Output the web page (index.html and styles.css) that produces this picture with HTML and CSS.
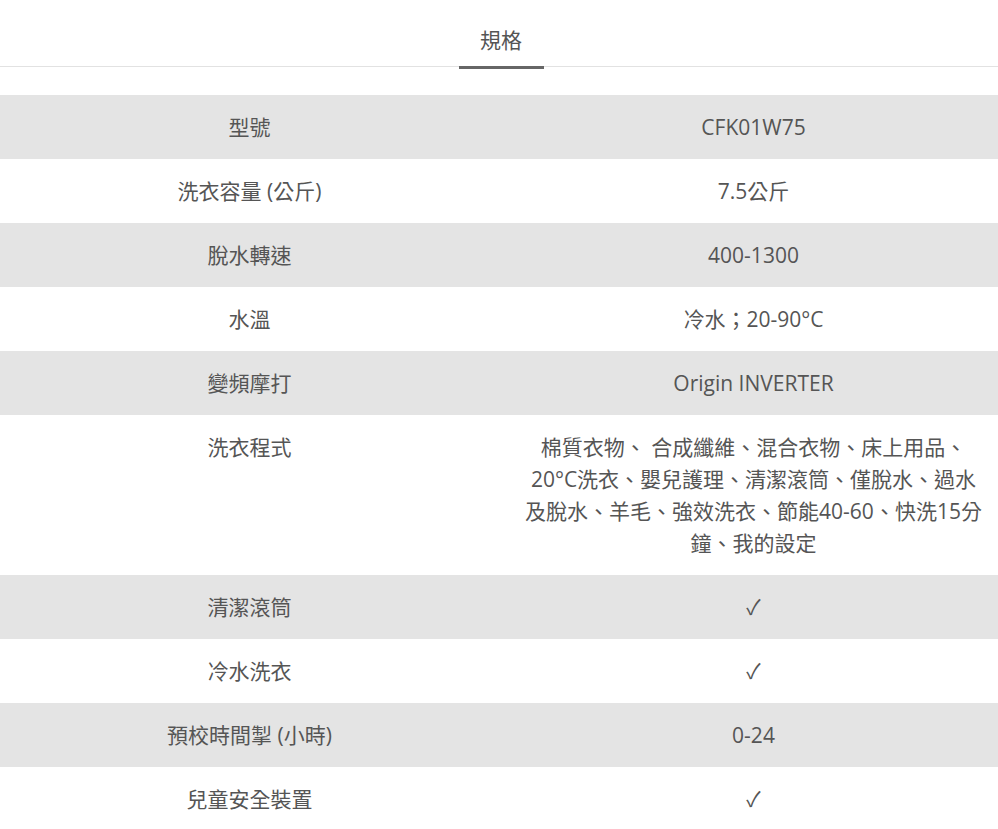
FILE: index.html
```html
<!DOCTYPE html>
<html lang="zh-Hant">
<head>
<meta charset="utf-8">
<link rel="stylesheet" href="styles.css">
</head>
<body>
<div class="tabs">
  <div class="tab active">規格</div>
</div>
<div class="spec">
  <div class="row"><div class="cell">型號</div><div class="cell">CFK01W75</div></div>
  <div class="row"><div class="cell">洗衣容量 (公斤)</div><div class="cell">7.5公斤</div></div>
  <div class="row"><div class="cell">脫水轉速</div><div class="cell">400-1300</div></div>
  <div class="row"><div class="cell">水溫</div><div class="cell">冷水；20-90°C</div></div>
  <div class="row"><div class="cell">變頻摩打</div><div class="cell">Origin INVERTER</div></div>
  <div class="row"><div class="cell">洗衣程式</div><div class="cell">棉質衣物、 合成纖維、混合衣物、床上用品、20°C洗衣、嬰兒護理、清潔滾筒、僅脫水、過水及脫水、羊毛、強效洗衣、節能40-60、快洗15分鐘、我的設定</div></div>
  <div class="row"><div class="cell">清潔滾筒</div><div class="cell">✓</div></div>
  <div class="row"><div class="cell">冷水洗衣</div><div class="cell">✓</div></div>
  <div class="row"><div class="cell">預校時間掣 (小時)</div><div class="cell">0-24</div></div>
  <div class="row"><div class="cell">兒童安全裝置</div><div class="cell">✓</div></div>
</div>
</body>
</html>
```
FILE: styles.css
```css
html, body {
  margin: 0;
  padding: 0;
  background: #fff;
}
body {
  font-family: "Open Sans", "Noto Sans CJK TC", sans-serif;
  color: #555;
  font-size: 21px;
}
.tabs {
  display: flex;
  justify-content: center;
  border-bottom: 1px solid #e2e2e2;
  height: 67px;
  box-sizing: border-box;
}
.tab {
  width: 85px;
  margin-left: 4px;
  text-align: center;
  padding-top: 24px;
  line-height: 32px;
  box-sizing: border-box;
  height: 69px;
  color: #555;
}
.tab.active {
  border-bottom: 3px solid #666;
}
.spec {
  margin-top: 28px;
}
.row {
  display: grid;
  grid-template-columns: 1fr 1fr;
}
.row:nth-child(odd) {
  background: #e4e4e4;
}
.cell {
  padding: 16px 16px;
  line-height: 32px;
  text-align: center;
}
.cell + .cell {
  padding-left: 22px;
  padding-right: 12px;
}
```
